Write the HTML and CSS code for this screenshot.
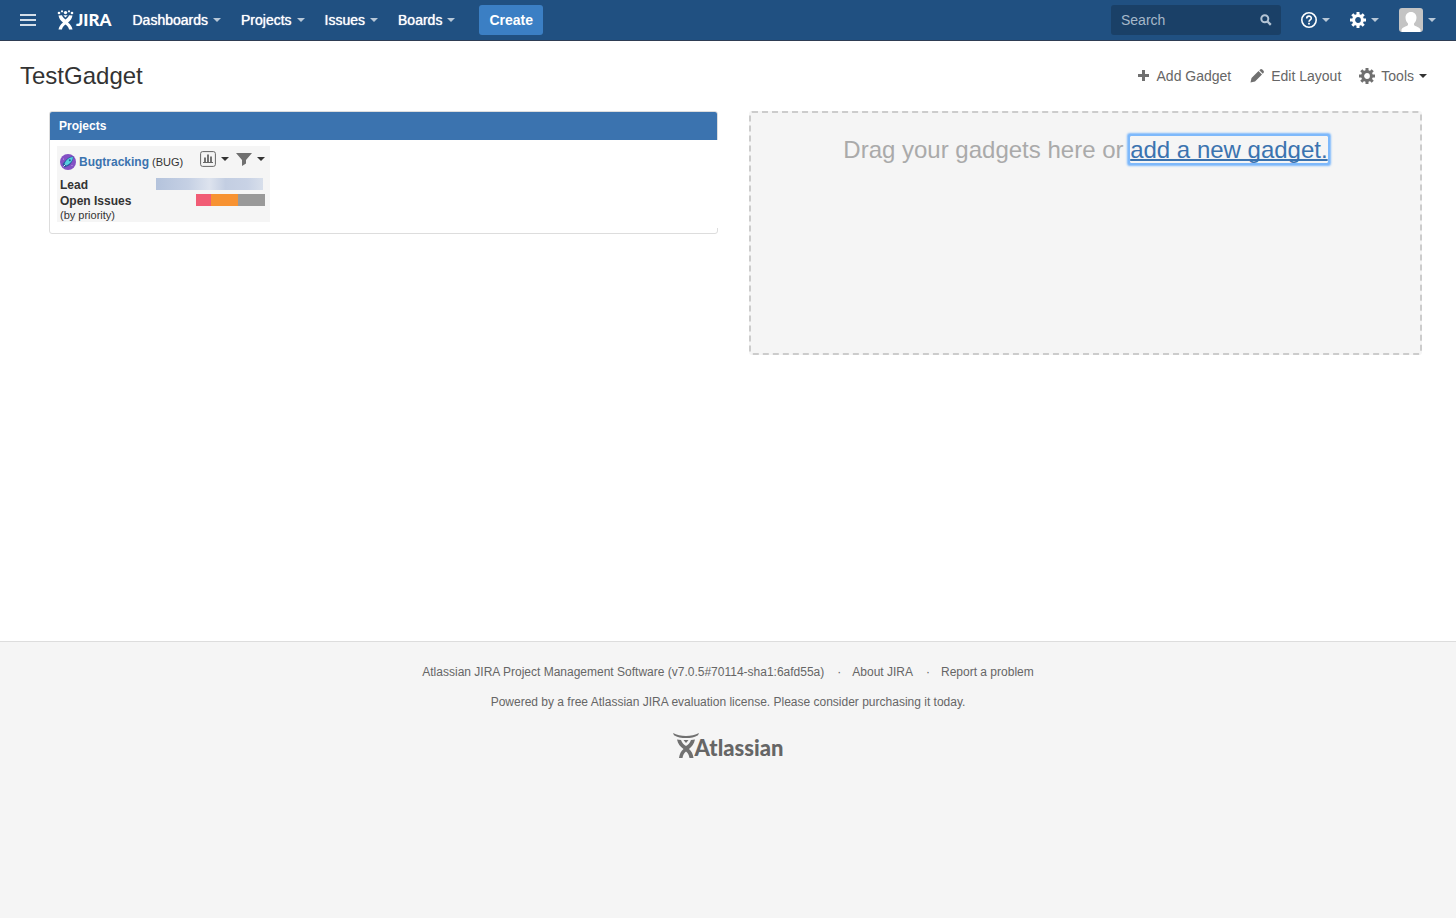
FILE: index.html
```html
<!DOCTYPE html>
<html lang="en">
<head>
    <meta charset="UTF-8">
    <meta name="viewport" content="width=device-width, initial-scale=1.0">
    <title>TestGadget - JIRA</title>
    <link rel="stylesheet" href="styles.css">
</head>
<body>
    <header class="header">
        <button class="icon-btn menu-btn" aria-label="Menu">
            <svg width="16" height="12" viewBox="0 0 16 12"><path d="M0 0h16v2H0zM0 5h16v2H0zM0 10h16v2H0z" fill="#d5dfe9"/></svg>
        </button>
        <a href="#" class="logo">
            <svg width="18" height="20" viewBox="0 0 18 20" fill="#fff">
                <circle cx="2" cy="3" r="1.300"/><circle cx="5" cy="1.300" r="1.100"/><circle cx="8.500" cy="2.600" r="1.700"/><circle cx="12" cy="1.300" r="1.100"/><circle cx="15" cy="3" r="1.300"/>
                <path d="M1.500 5.500L5 5.200C5.500 7 6.800 8.300 8.500 9.500C10.200 8.300 11.500 7 12 5.200L15.500 5.500C15 8.500 13.500 10.500 11 12.500C13.500 14.500 15 16.500 15.500 19.500H12C11.800 17.500 10.300 15.800 8.500 14.600C6.700 15.800 5.200 17.500 5 19.500H1.500C2 16.500 3.500 14.500 6 12.500C3.500 10.500 2 8.500 1.500 5.500z"/>
                <path d="M6.300 5.200h4.400L8.500 7.600z"/>
            </svg>
            <span class="logo-text">JIRA</span>
        </a>
        <nav class="nav">
            <a href="#" class="nav-item">Dashboards <span class="caret"></span></a>
            <a href="#" class="nav-item">Projects <span class="caret"></span></a>
            <a href="#" class="nav-item">Issues <span class="caret"></span></a>
            <a href="#" class="nav-item">Boards <span class="caret"></span></a>
        </nav>
        <button class="create-btn">Create</button>

        <div class="header-right">
            <form class="search">
                <input type="text" class="search-input" placeholder="Search" aria-label="Search">
                <svg width="12" height="12" viewBox="0 0 12 12" fill="none" stroke="#b4c4d4"><circle cx="4.800" cy="4.800" r="3.500" stroke-width="2"/><path d="M7.500 7.500L10.800 10.800" stroke-width="2.400"/></svg>
            </form>
            <button class="icon-btn" aria-label="Help">
                <svg width="16" height="16" viewBox="0 0 16 16" fill="none" stroke="#fff"><circle cx="8" cy="8" r="7.200" stroke-width="1.600"/><path d="M5.700 6.400C5.700 3.400 10.300 3.400 10.300 6.200C10.300 8 8 7.800 8 9.800" stroke-width="1.600"/><path d="M8 10.800v1.800" stroke-width="1.800"/></svg>
                <span class="caret"></span>
            </button>
            <button class="icon-btn" aria-label="Administration">
                <svg width="16" height="16" viewBox="0 0 16 16" fill="none" stroke="#fff"><circle cx="8" cy="8" r="4.400" stroke-width="3"/><path d="M8 0v3M8 13v3M0 8h3M13 8h3M2.300 2.300L4.500 4.500M11.500 11.500L13.700 13.700M2.300 13.700L4.500 11.500M11.500 4.500L13.700 2.300" stroke-width="3"/></svg>
                <span class="caret"></span>
            </button>
            <button class="icon-btn" aria-label="User profile">
                <svg class="avatar" width="24" height="24" viewBox="0 0 24 24"><path fill="#c4c4c4" d="M0 0h24v24H0z"/><path fill="#fff" d="M12 4C15.500 4 17.500 6.500 17.500 9.500C17.500 12 16.500 14 15 15.500V17C16 18.500 20 18.500 21.500 21.500V24H2.500V21.500C4 18.500 8 18.500 9 17V15.500C7.500 14 6.500 12 6.500 9.500C6.500 6.500 8.500 4 12 4z"/></svg>
                <span class="caret"></span>
            </button>
        </div>
    </header>

    <main class="content">
        <div class="page-header">
            <h1>TestGadget</h1>
            <div class="tools">
                <button class="tool-btn">
                    <svg width="16" height="16" viewBox="0 0 16 16"><path d="M7 2h3v4h4v3h-4v4H7v-4H3v-3h4z" fill="#707070"/></svg>
                    Add Gadget
                </button>
                <button class="tool-btn">
                    <svg width="16" height="16" viewBox="0 0 16 16" fill="#707070"><path d="M1.500 14.500L2.500 10L9.500 3L13 6.500L6 13.500zM10.300 2.200L11.500 1.200Q12.500 .8 13.300 1.500L14.500 2.700Q15.200 3.500 14.800 4.500L13.800 5.700z"/></svg>
                    Edit Layout
                </button>
                <button class="tool-btn">
                    <svg width="16" height="16" viewBox="0 0 16 16" fill="none" stroke="#707070"><circle cx="8" cy="8" r="4.400" stroke-width="3"/><path d="M8 0v3M8 13v3M0 8h3M13 8h3M2.300 2.300L4.500 4.500M11.500 11.500L13.700 13.700M2.300 13.700L4.500 11.500M11.500 4.500L13.700 2.300" stroke-width="3"/></svg>
                    Tools <span class="caret caret-dark"></span>
                </button>
            </div>
        </div>

        <div class="dashboard">
            <section class="gadget">
                <h2 class="gadget-title">Projects</h2>
                <div class="gadget-body">
                    <div class="project">
                        <div class="project-head">
                            <svg width="16" height="16" viewBox="0 0 16 16"><circle cx="8" cy="8" r="8" fill="#8450c4"/><path d="M13.500 2.500C9.500 2.500 7 4.500 5 7L2.500 10L4.500 13.500L9 11.500C11.500 9.500 13.500 6 13.500 2.500z" fill="#2c5aa0"/><path d="M13 3C9.500 3.200 6.500 5.500 4.500 9.500L6.500 11.500C10.500 9.500 12.800 6.500 13 3z" fill="#55cedf"/><circle cx="9.800" cy="6.200" r="1" fill="#235b96"/><path d="M3.500 12.500L5.500 10.500" stroke="#d8f5fb"/><circle cx="3.500" cy="5" r=".6" fill="#c9a8ed"/><circle cx="12" cy="11.500" r=".6" fill="#c9a8ed"/></svg>
                            <a href="#" class="project-name">Bugtracking</a>
                            <span class="small">(BUG)</span>
                            <div class="project-menus">
                                <button class="mini-btn" aria-label="Reports">
                                    <svg width="16" height="16" viewBox="0 0 16 16" fill="none" stroke="#666"><rect x=".6" y=".6" width="14.800" height="14.800" rx="2"/><path d="M3 11.500h10" /><path d="M5 6.500v5M8 3.500v8M11 5.500v6" stroke-width="1.800"/></svg>
                                    <span class="caret caret-dark"></span>
                                </button>
                                <button class="mini-btn" aria-label="Filters">
                                    <svg width="16" height="16" viewBox="0 0 16 16"><path d="M0 2h16L10 9v3.500L6 15V9z" fill="#707070"/></svg>
                                    <span class="caret caret-dark"></span>
                                </button>
                            </div>
                        </div>
                        <div class="project-row">
                            <strong>Lead</strong>
                            <span class="lead-name"></span>
                        </div>
                        <div class="project-row">
                            <strong>Open Issues</strong>
                            <div class="priority-bar">
                                <span class="critical"></span>
                                <span class="major"></span>
                                <span class="other"></span>
                            </div>
                        </div>
                        <div class="small">(by priority)</div>
                    </div>
                </div>
            </section>
            <section class="dropzone">
                Drag your gadgets here or <a href="#" class="add-link">add a new gadget.</a>
            </section>
        </div>
    </main>

    <footer class="footer">
        <ul class="footer-links">
            <li>Atlassian JIRA Project Management Software (v7.0.5#70114-sha1:6afd55a)</li>
            <li><a href="#">About JIRA</a></li>
            <li><a href="#">Report a problem</a></li>
        </ul>
        <p>Powered by a free Atlassian JIRA evaluation license. Please consider purchasing it today.</p>
        <a href="#" class="atlassian">
            <svg width="26" height="25" viewBox="0 0 26 25" fill="#707070">
                <path d="M0 0C7 4 19 4 26 0L25 2.200C19 6 7 6 1 2.200z"/>
                <path d="M4 6.500L8 7C9 10 11 12 13 13C15 12 17 10 18 7L22 6.500C21 11 19 13.500 16 16C18.500 18 20 21 20.500 25H16.500C16 22 15 20 13 18.500C11 20 10 22 9.500 25H6C6.500 21 8 18 10.500 16C7 13.500 5 11 4 6.500z"/>
                <path d="M10.500 7h5L13 10z"/>
            </svg>
            <span>Atlassian</span>
        </a>
    </footer>
</body>
</html>
```
FILE: styles.css
```css
* {
    box-sizing: border-box;
}
body {
    margin: 0;
    min-height: 100vh;
    display: flex;
    flex-direction: column;
    font-family: "Liberation Sans", Arial, sans-serif;
    font-size: 14px;
    line-height: 20px;
    color: #333;
    background-color: #fff;
}
a {
    color: #3b73af;
    text-decoration: none;
}
button {
    font: inherit;
    border: none;
    padding: 0;
    background: none;
    cursor: pointer;
}
svg {
    display: block;
    flex: none;
}
.caret {
    border: 4px solid transparent;
    border-top-color: #b8c8d8;
    border-bottom: none;
}
.caret-dark {
    border-top-color: #333;
}

/* Header */
.header {
    display: flex;
    align-items: center;
    height: 41px;
    padding: 0 20px;
    background-color: #205081;
    border-bottom: 1px solid #2e3d54;
}
.icon-btn {
    display: flex;
    align-items: center;
    gap: 5px;
}
.logo {
    display: flex;
    align-items: center;
    gap: 1px;
    margin: 0 21px;
}
.logo-text {
    color: #fff;
    font-family: Lato, "Liberation Sans", sans-serif;
    font-size: 17px;
    font-weight: 900;
}
.nav {
    display: flex;
    gap: 20px;
}
.nav-item {
    display: flex;
    align-items: center;
    gap: 5px;
    color: #fff;
    text-shadow: 0 0 1px #fff;
}
.create-btn {
    height: 30px;
    margin-left: 24px;
    padding: 0 10px;
    border-radius: 3px;
    background-color: #3b7fc4;
    color: #fff;
    font-weight: bold;
}
.header-right {
    display: flex;
    align-items: center;
    gap: 20px;
    margin-left: auto;
}
.search {
    display: flex;
    align-items: center;
    width: 170px;
    height: 30px;
    padding: 0 9px 0 10px;
    border-radius: 3px;
    background-color: #1a4067;
}
.search-input {
    flex: 1;
    min-width: 0;
    padding: 0;
    border: none;
    outline: none;
    background: none;
    font: inherit;
    color: #fff;
}
.search-input::placeholder {
    color: #a6b8ca;
    opacity: 1;
}
.avatar {
    border-radius: 3px;
}

/* Page header */
.content {
    min-height: 600px;
}
.page-header {
    display: flex;
    align-items: center;
    justify-content: space-between;
    height: 70px;
    padding: 0 29px 0 20px;
}
h1 {
    margin: 0;
    font-size: 24px;
    font-weight: normal;
}
.tools {
    display: flex;
    gap: 18px;
}
.tool-btn {
    display: flex;
    align-items: center;
    gap: 5px;
    color: #666;
}
.tool-btn svg {
    margin-right: 1px;
}

/* Dashboard */
.dashboard {
    display: grid;
    grid-template-columns: 1fr 1fr;
    align-items: start;
    gap: 27px;
    padding: 0 34px 0 49px;
}
.gadget {
    margin-right: 4px;
    padding-bottom: 5px;
    border: 1px solid #ddd;
    border-radius: 3px;
}
.gadget-title {
    margin: 0;
    padding: 4px 9px;
    border-radius: 2px 2px 0 0;
    background-color: #3b73af;
    color: #fff;
    font-size: 12px;
}
.gadget-body {
    margin-right: -1px;
    padding: 6px 7px;
    background-color: #fff;
}
.project {
    width: 213px;
    padding: 4px 5px 1px 3px;
    background-color: #f5f5f5;
    font-size: 12px;
    line-height: 16px;
}
.project-head {
    display: flex;
    align-items: center;
    gap: 3px;
    height: 24px;
    margin-bottom: 3px;
}
.project-name {
    font-weight: bold;
}
.small {
    font-size: 11px;
    line-height: 12px;
}
.project-menus {
    display: flex;
    gap: 7px;
    margin: 0 0 6px auto;
}
.mini-btn {
    display: flex;
    align-items: center;
    gap: 5px;
}
.project-row {
    display: flex;
    align-items: flex-start;
    justify-content: space-between;
}
.lead-name {
    width: 107px;
    height: 12px;
    margin: 1px 2px 0 0;
    background: linear-gradient(90deg, #b4c3dc, #c5d0e4 30%, #dde3ee 50%, #c3cee2 65%, #c8d2e5 85%, #d8dfeb);
}
.priority-bar {
    display: flex;
    width: 69px;
    height: 12px;
    margin-top: 1px;
}
.critical {
    flex: 15;
    background-color: #f15c75;
}
.major {
    flex: 27;
    background-color: #f79232;
}
.other {
    flex: 27;
    background-color: #999;
}
.dropzone {
    min-height: 244px;
    padding: 22px 20px;
    border: 2px dashed #ccc;
    border-radius: 3px;
    background-color: #f5f5f5;
    color: #aaa;
    font-size: 24px;
    line-height: 30px;
    text-align: center;
}
.add-link {
    border-radius: 1px;
    text-decoration: underline;
    text-decoration-thickness: 2px;
    text-decoration-skip-ink: none;
    box-shadow: 0 0 0 2px #7eb9fb, 0 0 2px 3px #7eb9fb;
}

/* Footer */
.footer {
    flex: 1;
    display: flex;
    flex-direction: column;
    align-items: center;
    gap: 10px;
    padding: 20px;
    border-top: 1px solid #ddd;
    background-color: #f5f5f5;
    color: #666;
    font-size: 12px;
}
.footer a {
    color: #666;
}
.footer-links {
    display: flex;
    margin: 0;
    padding: 0;
    list-style: none;
}
.footer-links li + li::before {
    content: "·";
    margin: 0 11px 0 13px;
}
.footer p {
    margin: 0;
}
.atlassian {
    display: flex;
    align-items: flex-end;
    margin-top: 11px;
}
.atlassian span {
    margin-left: -4px;
    font-family: Lato, "Liberation Sans", sans-serif;
    font-size: 22px;
    font-weight: 900;
}
```
